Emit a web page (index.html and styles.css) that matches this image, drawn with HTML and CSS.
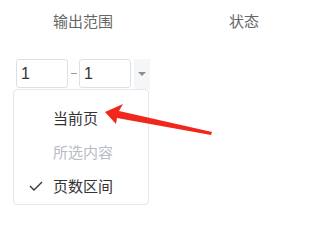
FILE: index.html
```html
<!DOCTYPE html>
<html lang="zh">
<head>
<meta charset="utf-8">
<link rel="stylesheet" href="styles.css">
</head>
<body>
<div class="page">
  <div class="header">
    <span class="col1">输出范围</span>
    <span class="col2">状态</span>
  </div>
  <div class="range">
    <div class="input">1</div>
    <span class="dash"></span>
    <div class="input">1</div>
    <div class="caret-box"><span class="caret"></span></div>
  </div>
  <div class="menu">
    <div class="item">当前页</div>
    <div class="item disabled">所选内容</div>
    <div class="item checked">
      <svg class="check" width="14" height="10" viewBox="0 0 14 10"><path d="M1 5 L5 9 L13 1" fill="none" stroke="#333" stroke-width="1.3"/></svg>
      页数区间
    </div>
  </div>
  <svg class="arrow" width="301" height="237" viewBox="0 0 301 237">
    <polygon points="105,112 123,104 119,111 212,132 211,135 117,118 116,124" fill="#f0281c"/>
  </svg>
</div>
</body>
</html>
```

FILE: styles.css
```css
html, body {
  margin: 0;
  padding: 0;
  background: #fff;
}
.page {
  position: relative;
  width: 301px;
  height: 237px;
  font-family: "Noto Sans CJK SC", "Noto Sans", sans-serif;
  font-size: 15px;
  color: #333;
}
.header {
  display: flex;
  height: 40px;
  align-items: center;
  color: #666;
}
.col1 {
  margin-left: 53px;
}
.col2 {
  margin-left: 116px;
}
.range {
  display: flex;
  align-items: center;
  margin-top: 19px;
  margin-left: 16px;
  height: 29px;
}
.input {
  box-sizing: border-box;
  width: 52px;
  height: 29px;
  border: 1px solid #dcdfe6;
  border-radius: 3px;
  padding-left: 4px;
  line-height: 27px;
  font-family: "Liberation Sans", sans-serif;
  font-size: 16px;
  color: #333;
}
.dash {
  width: 6px;
  height: 1px;
  background: #999;
  margin: 0 2px 0 3px;
}
.caret-box {
  box-sizing: border-box;
  width: 16px;
  height: 30px;
  margin-left: 3px;
  background: #f5f6f8;
  display: flex;
  align-items: center;
  justify-content: center;
}
.caret {
  width: 0;
  height: 0;
  border-left: 4px solid transparent;
  border-right: 4px solid transparent;
  border-top: 4px solid #8a8e99;
}
.menu {
  position: absolute;
  left: 13px;
  top: 89px;
  box-sizing: border-box;
  width: 136px;
  height: 116px;
  border: 1px solid #e4e7ed;
  border-radius: 4px;
  padding-top: 11px;
  background: #fff;
}
.item {
  position: relative;
  height: 34px;
  line-height: 34px;
  padding-left: 39px;
  color: #333;
}
.item.disabled {
  color: #b8bcc4;
}
.check {
  position: absolute;
  left: 15px;
  top: 12px;
}
.arrow {
  position: absolute;
  left: 0;
  top: 0;
}
```
